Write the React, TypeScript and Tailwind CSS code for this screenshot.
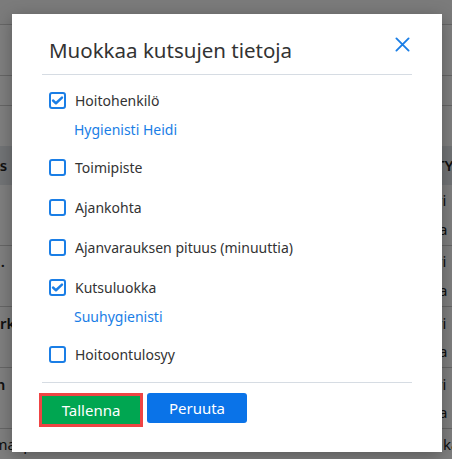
import React from 'react';

const rows = [
  { a: 'Virtanen Kari', b: '010191-', c: 'Hammaslääkäri', d: 'Hammashoitaja' },
  { a: 'Korhonen Anna J.', b: '230567-', c: 'Hammaslääkäri', d: 'Hammashoitaja' },
  { a: 'Mäkinen Merja Erk', b: '110305/', c: 'Hammaslääkäri', d: 'Hammashoitaja' },
  { a: 'Nieminen Kristiin', b: '220101/', c: 'Hammaslääkäri', d: 'Hammashoitaja' },
];

const Checkbox: React.FC<{ checked?: boolean }> = ({ checked }) => (
  <span className="flex h-[17px] w-[17px] shrink-0 items-center justify-center rounded-[3px] border-2 border-[#1a7ee6] bg-white">
    {checked && (
      <svg viewBox="0 0 16 16" className="h-[13px] w-[13px]" fill="none">
        <path d="M2.5 8l3.6 3.4L13.5 4.5" stroke="#1a7ee6" strokeWidth="3" strokeLinecap="round" strokeLinejoin="round" />
      </svg>
    )}
  </span>
);

const Field: React.FC<{ label: string; checked?: boolean; value?: string }> = ({ label, checked, value }) => (
  <div>
    <label className="flex h-[17px] items-center gap-[9px]">
      <Checkbox checked={checked} />
      <span className="text-[14px] text-[#333]">{label}</span>
    </label>
    {value && <div className="mt-[14px] pl-[25px] text-[14px] leading-[13px] text-[#1a7ee6]">{value}</div>}
  </div>
);

export default function App() {
  return (
    <div className="relative h-[459px] w-[452px] overflow-hidden bg-white font-['Noto_Sans',sans-serif] text-[#222]">
      {/* Page behind the dialog */}
      <div className="flex h-full flex-col">
        <div className="h-[25px] border-b border-[#ccc] bg-[#f6f6f6]" />
        <div className="h-[52px] border-b border-[#ccc]" />
        <div className="h-[30px] border-b border-[#ccc]" />
        <div className="h-[41px]" />
        <div className="flex h-[39px] items-center justify-between bg-[#e4e8ec] text-[15px] font-semibold">
          <span className="-ml-[42px]">Potilas</span>
          <span className="-mr-[14px]">TY T</span>
        </div>
        {rows.map((r) => (
          <div key={r.b} className="flex h-[62px] justify-between border-b border-[#ccc] text-[15px]">
            <div className="-ml-[122px] flex flex-col justify-center gap-[6px]">
              <span className="font-semibold">{r.a}</span>
              <span>{r.b}</span>
            </div>
            <div className="mr-[4px] flex w-[112px] shrink-0 flex-col items-start justify-center gap-[6px] whitespace-nowrap">
              <span>{r.c}</span>
              <span>{r.d}</span>
            </div>
          </div>
        ))}
        <div className="flex h-[30px] items-center whitespace-nowrap text-[15px]">
          <span className="-ml-[40px] w-[294px] shrink-0">Hammaspotilas Venla ?</span>
          <span className="w-[105px] shrink-0">07/2021</span>
          <span>Hammaslääkäri</span>
        </div>
      </div>
      <div className="absolute inset-0 bg-black/50" />

      {/* Dialog */}
      <div className="absolute left-[12px] top-[14px] w-[430px] bg-white px-[30px] pb-[25px] shadow-[0_4px_16px_rgba(0,0,0,0.3)]">
        <div className="flex items-start justify-between pl-[7px] pr-[2px] pt-[21px]">
          <h2 className="text-[20.5px] leading-[31px] text-[#333]">Muokkaa kutsujen tietoja</h2>
          <button className="mt-[2px] text-[#1a7ee6]">
            <svg viewBox="0 0 16 16" className="h-[15px] w-[15px]" fill="none">
              <path d="M1.5 1.5l13 13M14.5 1.5l-13 13" stroke="currentColor" strokeWidth="2" strokeLinecap="round" />
            </svg>
          </button>
        </div>
        <div className="mt-[8px] h-px bg-[#d6dce3]" />
        <div className="flex flex-col gap-[23px] pl-[7px] pt-[17px]">
          <Field label="Hoitohenkilö" checked value="Hygienisti Heidi" />
          <Field label="Toimipiste" />
          <Field label="Ajankohta" />
          <Field label="Ajanvarauksen pituus (minuuttia)" />
          <Field label="Kutsuluokka" checked value="Suuhygienisti" />
          <Field label="Hoitoontulosyy" />
        </div>
        <div className="mt-[19px] h-px bg-[#d6dce3]" />
        <div className="mt-[10px] flex gap-[4px]">
          <button className="-ml-[3px] h-[34px] w-[104px] border-[3px] border-[#ef4444] bg-[#00a651] text-[15px] text-white">
            Tallenna
          </button>
          <button className="h-[30px] w-[100px] rounded-[3px] bg-[#0a73e8] text-[15px] text-white">Peruuta</button>
        </div>
      </div>
    </div>
  );
}
